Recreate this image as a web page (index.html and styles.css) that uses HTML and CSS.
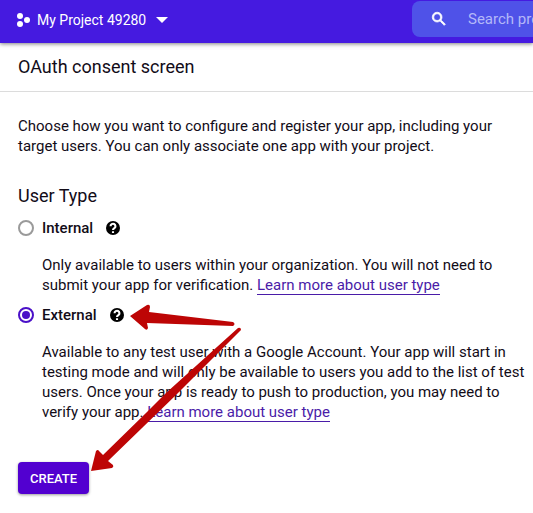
FILE: index.html
```html
<!DOCTYPE html>
<html lang="en">
<head>
    <meta charset="UTF-8">
    <meta name="viewport" content="width=device-width, initial-scale=1.0">
    <title>OAuth consent screen</title>
    <link rel="stylesheet" href="styles.css">
</head>
<body>
    <header class="topbar">
        <button type="button" class="project">
            <svg class="project-icon" width="14" height="16" viewBox="0 0 14 16" aria-hidden="true">
                <circle cx="4" cy="4" r="3"/>
                <circle cx="11" cy="8" r="3"/>
                <circle cx="4" cy="12" r="3"/>
            </svg>
            <span>My Project 49280</span>
            <svg class="caret" width="12" height="6" viewBox="0 0 12 6" aria-hidden="true">
                <path d="M0 0h12L6 6z"/>
            </svg>
        </button>
        <div class="search">
            <svg width="18" height="18" viewBox="0 0 24 24" aria-hidden="true">
                <path d="M15.5 14h-.79l-.28-.27A6.47 6.47 0 0 0 16 9.5 6.5 6.5 0 1 0 9.5 16c1.61 0 3.09-.59 4.23-1.57l.27.28v.79l5 4.99L20.49 19l-4.99-5zm-6 0C7.01 14 5 11.99 5 9.5S7.01 5 9.5 5 14 7.01 14 9.5 11.99 14 9.5 14z"/>
            </svg>
            <input type="text" class="search-input" placeholder="Search products and resources" aria-label="Search">
        </div>
    </header>

    <h1 class="page-title">OAuth consent screen</h1>

    <main class="content">
        <p class="intro">Choose how you want to configure and register your app, including your target users. You can only associate one app with your project.</p>

        <form>
            <h2 class="section-title" id="user-type">User Type</h2>
            <div role="radiogroup" aria-labelledby="user-type">
                <div class="option">
                    <input type="radio" id="internal" name="userType" value="internal">
                    <label for="internal">Internal</label>
                    <button type="button" class="help" aria-label="About internal">
                        <svg width="14" height="14" viewBox="2 2 20 20" aria-hidden="true">
                            <circle cx="12" cy="12" r="10"/>
                            <path d="M8.5 9.5a3.5 3.5 0 1 1 5.5 2.8c-1.3.9-2 1.4-2 2.7M12 16.5v2.5"/>
                        </svg>
                    </button>
                </div>
                <p class="description">Only available to users within your organization. You will not need to submit your app for verification. <a href="#">Learn more about user type</a></p>

                <div class="option">
                    <input type="radio" id="external" name="userType" value="external" checked>
                    <label for="external">External</label>
                    <button type="button" class="help" aria-label="About external">
                        <svg width="14" height="14" viewBox="2 2 20 20" aria-hidden="true">
                            <circle cx="12" cy="12" r="10"/>
                            <path d="M8.5 9.5a3.5 3.5 0 1 1 5.5 2.8c-1.3.9-2 1.4-2 2.7M12 16.5v2.5"/>
                        </svg>
                    </button>
                </div>
                <p class="description">Available to any test user with a Google Account. Your app will start in testing mode and will only be available to users you add to the list of test users. Once your app is ready to push to production, you may need to verify your app. <a href="#">Learn more about user type</a></p>
            </div>
            <button type="submit" class="create">CREATE</button>
        </form>
    </main>

    <!-- arrows pointing at the External option and the button -->
    <svg class="arrows" width="160" height="180" viewBox="88 300 160 180" aria-hidden="true">
        <path d="M130 316 147 305Q150 304 150 307L149 312 233 322Q236 324 233 326L147 323 148 328Q147 331 145 329z"/>
        <path d="M91 471 96 451Q98 449 99 451L103 455 147 412 166 393 238 328Q241 327 241 330L176 395 108 461 113 465Q114 467 112 468z"/>
    </svg>
</body>
</html>
```
FILE: styles.css
```css
* {
    box-sizing: border-box;
}
body {
    position: relative;
    margin: 0;
    background-color: #fff;
    color: #120c18;
    font-family: Roboto, Arial, sans-serif;
    font-size: 15px;
    line-height: 20px;
}
button {
    border: none;
    font-family: inherit;
    cursor: pointer;
}
.topbar {
    display: flex;
    align-items: flex-start;
    justify-content: space-between;
    height: 43px;
    padding-left: 16px;
    background-color: #451ae0;
    box-shadow: 0 1px 4px rgba(0, 0, 0, 0.5);
}
.project {
    display: flex;
    align-items: center;
    height: 40px;
    padding: 0;
    background: none;
    color: #fff;
    font-size: 14px;
    white-space: nowrap;
}
.project svg,
.search svg {
    flex: none;
    fill: #fff;
}
.search svg {
    stroke: #fff;
    stroke-width: 1;
}
.project-icon {
    margin-right: 7px;
}
.caret {
    margin-left: 10px;
}
.search {
    display: flex;
    flex: 0 0 121px;
    align-items: center;
    min-width: 0;
    height: 36px;
    margin-top: 1px;
    padding-left: 18px;
    border-radius: 8px 0 0 8px;
    background-color: #4f52e8;
}
.search-input {
    flex: 1;
    width: 0;
    min-width: 0;
    margin-left: 20px;
    padding: 0;
    border: none;
    outline: none;
    background: none;
    color: #fff;
    font: inherit;
}
.search-input::placeholder {
    color: #b4b8f8;
    opacity: 1;
}
.page-title {
    margin: 0;
    padding: 12px 18px;
    border-bottom: 1px solid #dcdcdc;
    font-size: 18px;
    font-weight: 400;
    line-height: 24px;
}
.content {
    padding: 24px 8px 18px 18px;
}
.intro {
    margin: 0 0 28px;
}
.section-title {
    margin: 0 0 10px;
    font-size: 18px;
    font-weight: 400;
    line-height: 24px;
}
.option {
    display: flex;
    align-items: center;
    height: 20px;
}
.option input {
    display: grid;
    flex: none;
    place-items: center;
    width: 16px;
    height: 16px;
    margin: 0 8px 0 0;
    border: 2px solid #9a9a9a;
    border-radius: 50%;
    appearance: none;
}
.option input:checked {
    border-color: #4a10c8;
}
.option input:checked::before {
    content: "";
    width: 8px;
    height: 8px;
    border-radius: 50%;
    background-color: #4a10c8;
}
.option label {
    font-weight: 500;
}
.help {
    display: flex;
    margin-left: 13px;
    padding: 0;
    background: none;
}
.help path {
    fill: none;
    stroke: #fff;
    stroke-width: 3;
}
.description {
    margin: 17px 0 10px 24px;
}
.description a {
    border-bottom: 1px solid #4a1ca8;
    color: #4a1ca8;
    text-decoration: none;
}
.create {
    height: 32px;
    margin-top: 30px;
    padding: 0 12px;
    border-radius: 4px;
    background-color: #5200d0;
    box-shadow: 0 1px 3px rgba(0, 0, 0, 0.4);
    color: #fff;
    font-size: 13px;
    font-weight: 500;
}
.arrows {
    position: absolute;
    top: 300px;
    left: 88px;
    fill: #bd0505;
    pointer-events: none;
}
```
